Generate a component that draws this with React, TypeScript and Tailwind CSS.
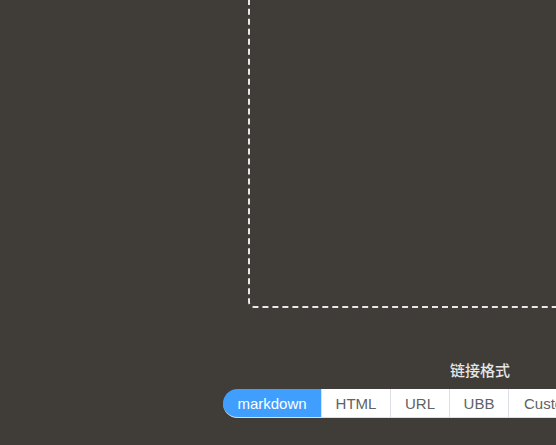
import React, { useState } from 'react'

const formats = [
  { label: 'markdown', w: 'w-[98px] text-center' },
  { label: 'HTML', w: 'w-[69px] text-center' },
  { label: 'URL', w: 'w-[59px] text-center' },
  { label: 'UBB', w: 'w-[59px] text-center' },
  { label: 'Custom', w: 'px-[15px]' },
]

export default function App() {
  const [active, setActive] = useState('markdown')

  return (
    <div className="w-[556px] h-[445px] overflow-hidden bg-[#403c37] font-['Liberation_Sans','Noto_Sans_CJK_SC',sans-serif]">
      <div className="w-[800px]">
        {/* upload drop zone */}
        <div className="ml-[248px] mt-[-24px] w-[480px] h-[332px] border-2 border-dashed border-[#e8e8e8] rounded-[6px]" />

        <div className="mt-[53px] ml-[450px] w-[60px] text-center text-[15px] leading-5 font-medium text-[#e6e6e6]">
          链接格式
        </div>

        <div className="mt-[8px] ml-[223px] flex">
          {formats.map((f, i) => (
            <button
              key={f.label}
              onClick={() => setActive(f.label)}
              className={`${f.w} h-[29px] text-[15px] leading-none border-b border-[#dcdfe6] ${
                i === 0 ? 'rounded-l-[15px]' : 'border-l'
              } ${active === f.label ? 'bg-[#409eff] border-[#409eff] text-white' : 'bg-white text-[#606266]'}`}
            >
              {f.label}
            </button>
          ))}
        </div>
      </div>
    </div>
  )
}
